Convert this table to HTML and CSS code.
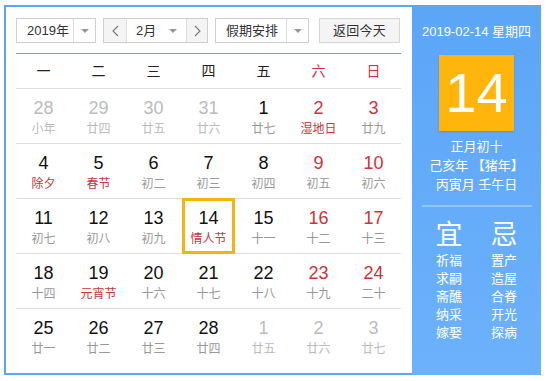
FILE: index.html
```html
<!DOCTYPE html>
<html lang="zh-CN">
<head>
<meta charset="utf-8">
<title>万年历</title>
<link rel="stylesheet" href="styles.css">
</head>
<body>
<div class="widget">
  <div class="main">
    <div class="toolbar">
      <div class="select year">
        <span class="sel-text">2019年</span>
        <span class="sel-arrow"><i class="tri"></i></span>
      </div>
      <div class="month-group">
        <span class="nav-btn"><svg width="7" height="12" viewBox="0 0 7 12"><path d="M6 1 L1 6 L6 11" fill="none" stroke="#777" stroke-width="1.1"/></svg></span>
        <span class="month-sel"><span class="sel-text">2月</span><i class="tri"></i></span>
        <span class="nav-btn"><svg width="7" height="12" viewBox="0 0 7 12"><path d="M1 1 L6 6 L1 11" fill="none" stroke="#777" stroke-width="1.1"/></svg></span>
      </div>
      <div class="select holiday">
        <span class="sel-text">假期安排</span>
        <span class="sel-arrow"><i class="tri"></i></span>
      </div>
      <div class="today-btn">返回今天</div>
    </div>
    <div class="weekhead">
      <span>一</span><span>二</span><span>三</span><span>四</span><span>五</span><span class="red">六</span><span class="red">日</span>
    </div>
    <div class="grid">
      <div class="row">
        <div class="cell muted"><b>28</b><em>小年</em></div>
        <div class="cell muted"><b>29</b><em>廿四</em></div>
        <div class="cell muted"><b>30</b><em>廿五</em></div>
        <div class="cell muted"><b>31</b><em>廿六</em></div>
        <div class="cell"><b>1</b><em>廿七</em></div>
        <div class="cell wk"><b>2</b><em class="fest">湿地日</em></div>
        <div class="cell wk"><b>3</b><em>廿九</em></div>
      </div>
      <div class="row">
        <div class="cell"><b>4</b><em class="fest">除夕</em></div>
        <div class="cell"><b>5</b><em class="fest">春节</em></div>
        <div class="cell"><b>6</b><em>初二</em></div>
        <div class="cell"><b>7</b><em>初三</em></div>
        <div class="cell"><b>8</b><em>初四</em></div>
        <div class="cell wk"><b>9</b><em>初五</em></div>
        <div class="cell wk"><b>10</b><em>初六</em></div>
      </div>
      <div class="row">
        <div class="cell"><b>11</b><em>初七</em></div>
        <div class="cell"><b>12</b><em>初八</em></div>
        <div class="cell"><b>13</b><em>初九</em></div>
        <div class="cell today"><b>14</b><em class="fest">情人节</em></div>
        <div class="cell"><b>15</b><em>十一</em></div>
        <div class="cell wk"><b>16</b><em>十二</em></div>
        <div class="cell wk"><b>17</b><em>十三</em></div>
      </div>
      <div class="row">
        <div class="cell"><b>18</b><em>十四</em></div>
        <div class="cell"><b>19</b><em class="fest">元宵节</em></div>
        <div class="cell"><b>20</b><em>十六</em></div>
        <div class="cell"><b>21</b><em>十七</em></div>
        <div class="cell"><b>22</b><em>十八</em></div>
        <div class="cell wk"><b>23</b><em>十九</em></div>
        <div class="cell wk"><b>24</b><em>二十</em></div>
      </div>
      <div class="row">
        <div class="cell"><b>25</b><em>廿一</em></div>
        <div class="cell"><b>26</b><em>廿二</em></div>
        <div class="cell"><b>27</b><em>廿三</em></div>
        <div class="cell"><b>28</b><em>廿四</em></div>
        <div class="cell muted"><b>1</b><em>廿五</em></div>
        <div class="cell muted"><b>2</b><em>廿六</em></div>
        <div class="cell muted"><b>3</b><em>廿七</em></div>
      </div>
    </div>
  </div>
  <div class="panel">
    <div class="p-date">2019-02-14 星期四</div>
    <div class="p-day">14</div>
    <div class="p-lunar">
      <div>正月初十</div>
      <div>己亥年 【猪年】</div>
      <div>丙寅月 壬午日</div>
    </div>
    <div class="p-sep"></div>
    <div class="p-yiji">
      <div class="col">
        <div class="big">宜</div>
        <div>祈福</div><div>求嗣</div><div>斋醮</div><div>纳采</div><div>嫁娶</div>
      </div>
      <div class="col">
        <div class="big">忌</div>
        <div>置产</div><div>造屋</div><div>合脊</div><div>开光</div><div>探病</div>
      </div>
    </div>
  </div>
</div>
</body>
</html>
```
FILE: styles.css
```css
* { box-sizing: border-box; }
html, body { margin: 0; padding: 0; background: #fff; }
body {
  font-family: "Liberation Sans", "Noto Sans CJK SC", sans-serif;
  color: #333;
}
.widget {
  margin: 5px 0 0 4px;
  width: 537px;
  height: 370px;
  border: 2px solid #5ca5f4;
  border-right: none;
  display: flex;
}
.main {
  width: 406px;
  padding: 11px 11px 10px 10px;
}
.toolbar {
  display: flex;
  height: 25px;
  font-size: 13px;
  margin-bottom: 10px;
}
.select {
  display: flex;
  border: 1px solid #cfcfcf;
  background: #fff;
  height: 25px;
}
.sel-text {
  line-height: 23px;
  white-space: nowrap;
}
.year { width: 80px; margin-right: 7px; }
.year .sel-text { width: 56px; padding-left: 10px; }
.sel-arrow {
  flex: 1;
  border-left: 1px solid #ddd;
  display: flex;
  align-items: center;
  justify-content: center;
}
.tri {
  display: block;
  width: 0;
  height: 0;
  border-left: 4px solid transparent;
  border-right: 4px solid transparent;
  border-top: 4px solid #999;
}
.month-group {
  display: flex;
  width: 105px;
  height: 25px;
  border: 1px solid #cfcfcf;
  margin-right: 7px;
}
.nav-btn {
  width: 23px;
  background: #f4f4f4;
  display: flex;
  align-items: center;
  justify-content: center;
}
.month-group .nav-btn:last-child { width: 21px; border-left: 1px solid #ddd; }
.month-group .nav-btn:first-child { border-right: 1px solid #ddd; }
.month-sel {
  flex: 1;
  display: flex;
  align-items: center;
  padding-left: 9px;
  background: #fff;
}
.month-sel .sel-text { width: 33px; }
.holiday { width: 94px; margin-right: 10px; }
.holiday .sel-text { width: 70px; padding-left: 10px; }
.today-btn {
  width: 81px;
  height: 25px;
  border: 1px solid #d5d5d5;
  background: #f4f4f4;
  text-align: center;
  line-height: 23px;
  font-size: 13px;
  letter-spacing: 0.3px;
}
.weekhead {
  display: grid;
  grid-template-columns: repeat(7, 55px);
  height: 36px;
  border-top: 1px solid #5ca5f4;
  border-bottom: 1px solid #ddd;
  font-size: 14px;
  color: #222;
}
.weekhead span {
  text-align: center;
  line-height: 34px;
}
.red { color: #d2303c; }
.row {
  display: grid;
  grid-template-columns: repeat(7, 55px);
  height: 55px;
  border-bottom: 1px solid #ddd;
}
.row:last-child { border-bottom: none; height: 54px; }
.cell {
  position: relative;
  text-align: center;
  padding-top: 9px;
}
.cell b {
  display: block;
  font-weight: normal;
  font-size: 18px;
  line-height: 20px;
  color: #111;
}
.cell em {
  display: block;
  font-style: normal;
  font-size: 12px;
  line-height: 20px;
  color: #999;
  font-family: "Noto Sans CJK SC", sans-serif;
}
.cell.wk b { color: #d2303c; }
.cell em.fest { color: #c9353c; }
.cell.muted b { color: #bbb; }
.cell.muted em { color: #bbb; }
.cell.today::after {
  content: "";
  position: absolute;
  left: 1px;
  right: 1px;
  top: -1px;
  bottom: -1px;
  border: 3px solid #f5b40e;
}
.panel {
  width: 129px;
  height: 370px;
  margin-top: -2px;
  background: linear-gradient(#5ca6f8, #6cb1fb);
  color: #fff;
  display: flex;
  flex-direction: column;
  align-items: center;
  font-family: "Liberation Sans", "Noto Sans CJK SC", sans-serif;
}
.p-date {
  margin-top: 17px;
  font-size: 13px;
  line-height: 20px;
  white-space: nowrap;
}
.p-day {
  margin-top: 13px;
  width: 75px;
  height: 76px;
  background: #ffb50c;
  box-shadow: 0 1px 2px rgba(0,0,0,0.15);
  font-size: 56px;
  line-height: 76px;
  text-align: center;
}
.p-lunar {
  margin-top: 6px;
  font-size: 13px;
  line-height: 19px;
  text-align: center;
}
.p-sep {
  margin-top: 11px;
  width: 110px;
  height: 2px;
  background: rgba(255,255,255,0.3);
}
.p-yiji {
  margin-top: 12px;
  display: grid;
  grid-template-columns: 55px 55px;
  font-size: 13px;
  line-height: 18px;
  text-align: center;
}
.p-yiji .big {
  font-size: 27px;
  line-height: 32px;
  margin-bottom: 1px;
}
```
